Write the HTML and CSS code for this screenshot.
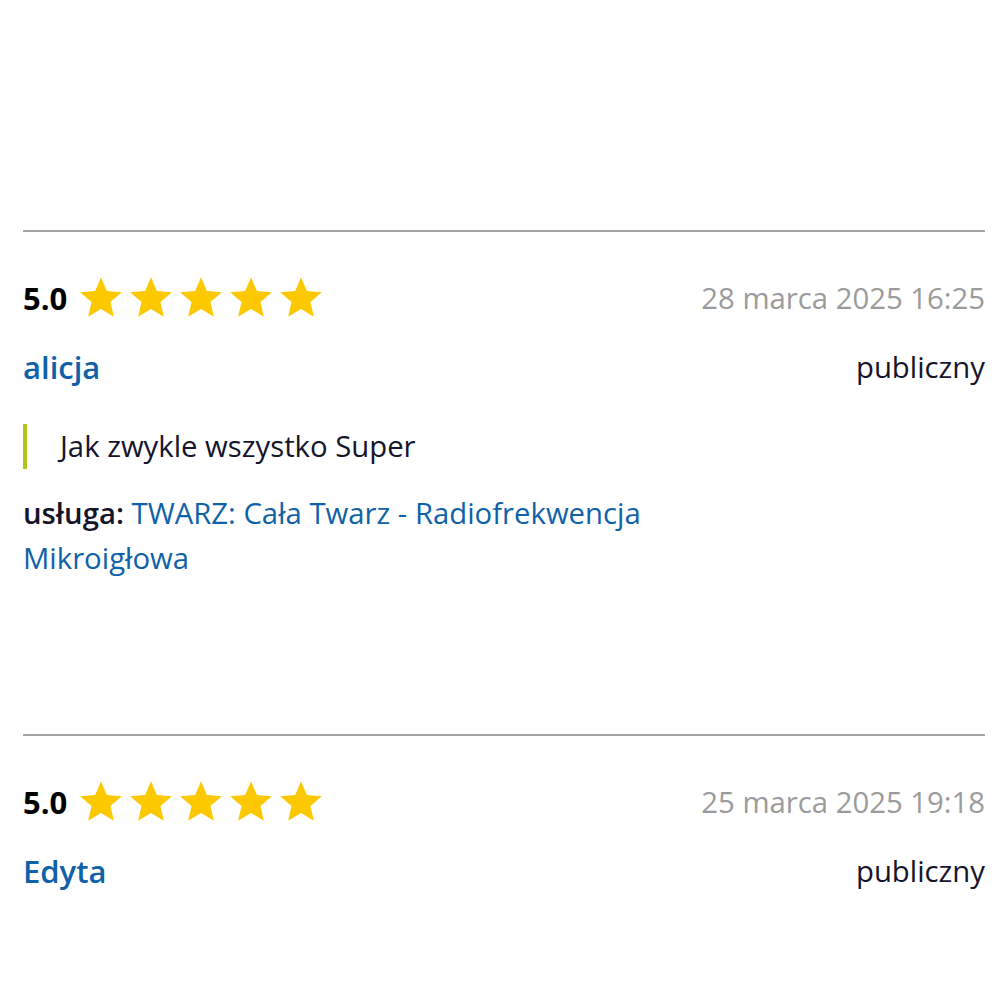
FILE: index.html
```html
<!DOCTYPE html>
<html lang="pl">
<head>
    <meta charset="UTF-8">
    <title>Opinie</title>
    <link rel="stylesheet" href="styles.css">
</head>
<body>
    <div id="wrap">
        <div class="review">
            <div class="review-top">
                <div class="rating">
                    <span class="score">5.0</span>
                    <span class="stars">
                        <svg viewBox="0 0 24 24"><path d="M12 17.27L18.18 21l-1.64-7.03L22 9.24l-7.19-.61L12 2 9.19 8.63 2 9.24l5.46 4.73L5.82 21z"/></svg>
                        <svg viewBox="0 0 24 24"><path d="M12 17.27L18.18 21l-1.64-7.03L22 9.24l-7.19-.61L12 2 9.19 8.63 2 9.24l5.46 4.73L5.82 21z"/></svg>
                        <svg viewBox="0 0 24 24"><path d="M12 17.27L18.18 21l-1.64-7.03L22 9.24l-7.19-.61L12 2 9.19 8.63 2 9.24l5.46 4.73L5.82 21z"/></svg>
                        <svg viewBox="0 0 24 24"><path d="M12 17.27L18.18 21l-1.64-7.03L22 9.24l-7.19-.61L12 2 9.19 8.63 2 9.24l5.46 4.73L5.82 21z"/></svg>
                        <svg viewBox="0 0 24 24"><path d="M12 17.27L18.18 21l-1.64-7.03L22 9.24l-7.19-.61L12 2 9.19 8.63 2 9.24l5.46 4.73L5.82 21z"/></svg>
                    </span>
                </div>
                <span class="date">28 marca 2025 16:25</span>
            </div>
            <div class="review-author">
                <a href="#" class="name">alicja</a>
                <span class="visibility">publiczny</span>
            </div>
            <blockquote>Jak zwykle wszystko Super</blockquote>
            <p class="service"><b>usługa:</b> <a href="#">TWARZ: Cała Twarz - Radiofrekwencja Mikroigłowa</a></p>
        </div>

        <div class="review">
            <div class="review-top">
                <div class="rating">
                    <span class="score">5.0</span>
                    <span class="stars">
                        <svg viewBox="0 0 24 24"><path d="M12 17.27L18.18 21l-1.64-7.03L22 9.24l-7.19-.61L12 2 9.19 8.63 2 9.24l5.46 4.73L5.82 21z"/></svg>
                        <svg viewBox="0 0 24 24"><path d="M12 17.27L18.18 21l-1.64-7.03L22 9.24l-7.19-.61L12 2 9.19 8.63 2 9.24l5.46 4.73L5.82 21z"/></svg>
                        <svg viewBox="0 0 24 24"><path d="M12 17.27L18.18 21l-1.64-7.03L22 9.24l-7.19-.61L12 2 9.19 8.63 2 9.24l5.46 4.73L5.82 21z"/></svg>
                        <svg viewBox="0 0 24 24"><path d="M12 17.27L18.18 21l-1.64-7.03L22 9.24l-7.19-.61L12 2 9.19 8.63 2 9.24l5.46 4.73L5.82 21z"/></svg>
                        <svg viewBox="0 0 24 24"><path d="M12 17.27L18.18 21l-1.64-7.03L22 9.24l-7.19-.61L12 2 9.19 8.63 2 9.24l5.46 4.73L5.82 21z"/></svg>
                    </span>
                </div>
                <span class="date">25 marca 2025 19:18</span>
            </div>
            <div class="review-author">
                <a href="#" class="name">Edyta</a>
                <span class="visibility">publiczny</span>
            </div>
        </div>
    </div>
</body>
</html>
```

FILE: styles.css
```css
body{
    margin: 0;
    font-family: "Open Sans", "Liberation Sans", sans-serif;
    font-size: 29.3px;
    color: #14142b;
    background: #fff;
    overflow: hidden;
}

#wrap{
    padding: 230px 23px 0;
    height: 778px;
}

.review{
    border-top: 2px solid #a3a3a3;
    padding-top: 40px;
    height: 462px;
}

.review:last-child{
    height: auto;
}

.review-top{
    display: flex;
    justify-content: space-between;
    align-items: center;
    height: 52px;
}

.rating{
    display: flex;
    align-items: center;
}

.score{
    font-weight: 700;
    font-size: 31px;
    color: #000;
    margin-right: 9px;
}

.stars{
    display: flex;
}

.stars svg{
    width: 50px;
    height: 50px;
    fill: #fcc800;
}

.date{
    color: #9b9b9b;
}

.review-author{
    display: flex;
    justify-content: space-between;
    align-items: center;
    margin-top: 22px;
}

.name{
    color: #1062a8;
    font-weight: 600;
    font-size: 31px;
    text-decoration: none;
}

blockquote{
    margin: 36px 0 0;
    padding: 0 0 0 33px;
    border-left: 4px solid #b0c419;
    line-height: 45px;
}

.service{
    margin: 22px 0 0;
    max-width: 690px;
    line-height: 45px;
}

.service b{
    font-weight: 600;
}

.service a{
    color: #1062a8;
    text-decoration: none;
}
```
